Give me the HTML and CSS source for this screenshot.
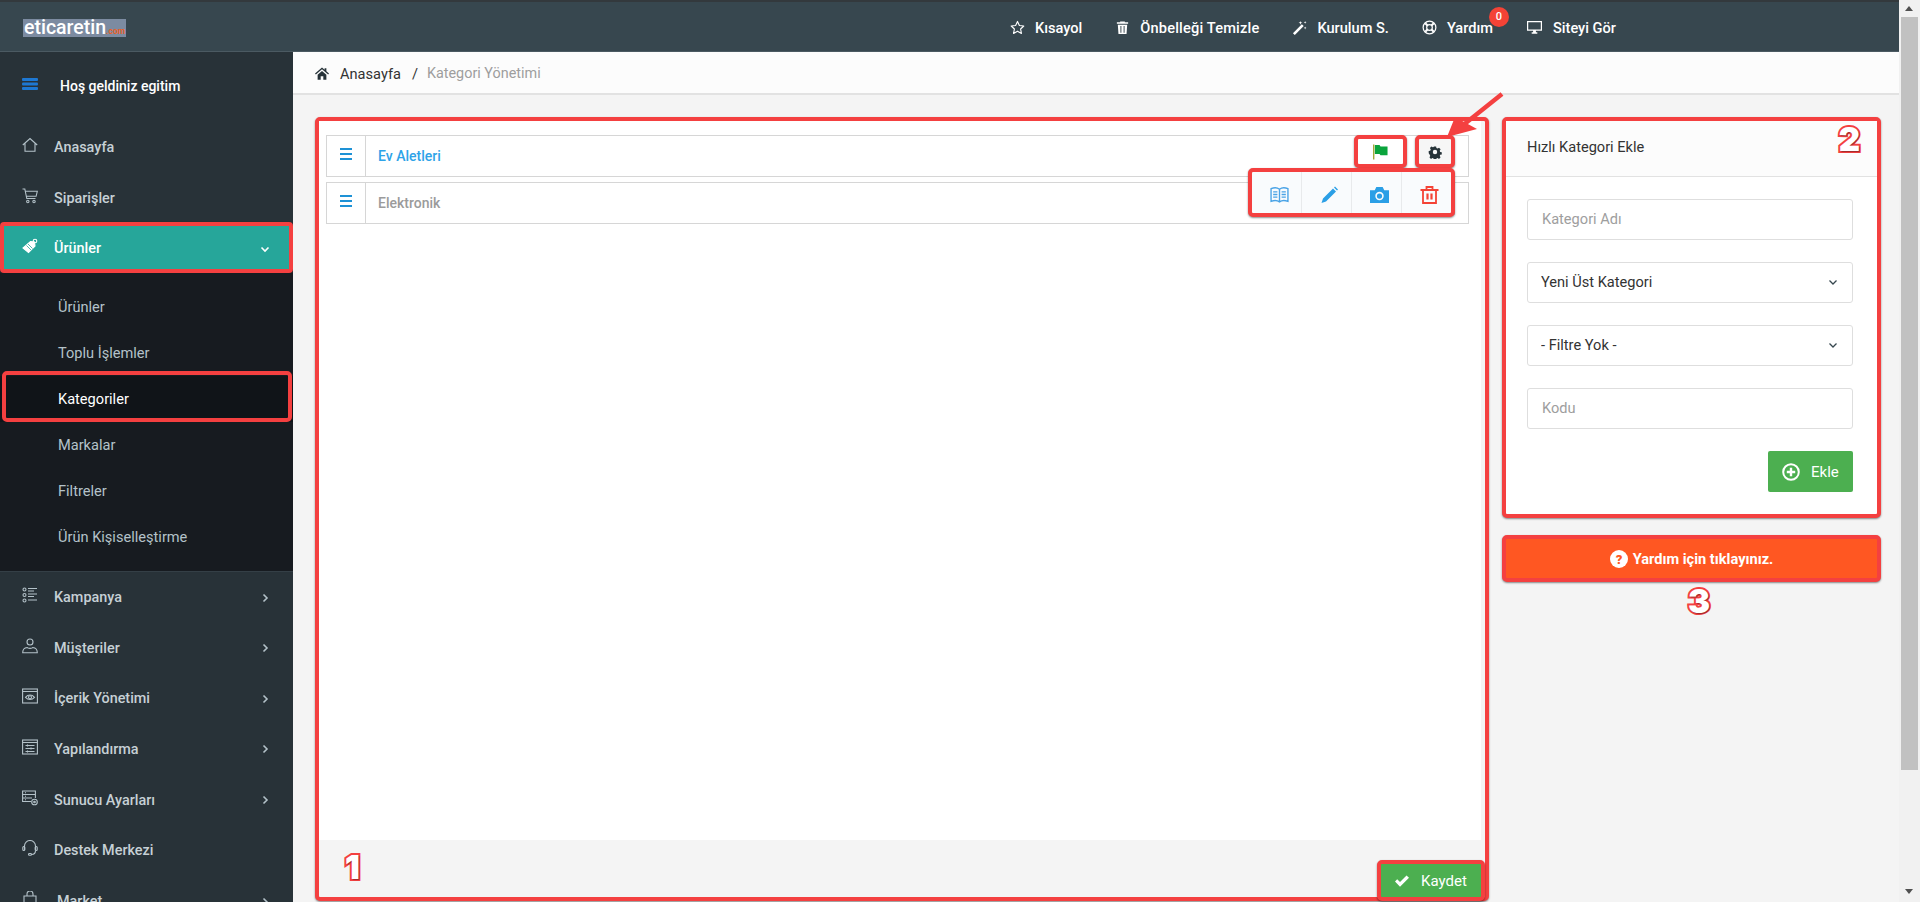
FILE: index.html
```html
<!DOCTYPE html>
<html lang="tr">
<head>
  <meta charset="UTF-8" />
  <title>Kategori Yönetimi</title>
  <link rel="stylesheet" href="styles.css">
</head>
<body>
  <div class="page">
    <header class="topbar">
      <div class="logo">eticaretin<span>.com</span></div>
      <nav class="topnav">
        <a class="topnav-item">
          <svg viewBox="0 0 16 16" fill="none" stroke="#fff" stroke-width="1.2" stroke-linejoin="round"><path d="M8 1.5l2 4.3 4.7.6-3.4 3.2.9 4.7L8 11.9l-4.2 2.4.9-4.7L1.300 6.400l4.700-.6z"/></svg>
          Kısayol
        </a>
        <a class="topnav-item topnav-cache">
          <svg viewBox="0 0 16 16" fill="#fff"><path d="M5.500 2.500V1.500h5v1H14v1.500H2V2.500zM3 5h10l-.7 10H3.700zM5.800 6.500v7h1v-7zm3.400 0v7h1v-7z"/></svg>
          Önbelleği Temizle
        </a>
        <a class="topnav-item">
          <svg viewBox="0 0 16 16" fill="#fff"><path d="M10.500 4.500l2 2L3 16l-2-2zM9 1l.5 1.500L11 3l-1.500.5L9 5l-.5-1.500L7 3l1.500-.5zM14 1l.4 1.100 1.100.4-1.100.4L14 4l-.4-1.100-1.100-.4 1.100-.4zM14 7l.4 1.100 1.100.4-1.100.4L14 10l-.4-1.100-1.100-.4 1.100-.4z"/></svg>
          Kurulum S.
        </a>
        <a class="topnav-item topnav-help">
          <svg viewBox="0 0 16 16" fill="none" stroke="#fff"><circle cx="8" cy="8" r="6.800" stroke-width="1.300"/><circle cx="8" cy="8" r="3" stroke-width="1.300"/><path stroke-width="2.200" d="M3.500 3.500l2.300 2.300M12.500 3.500l-2.300 2.300M3.500 12.500l2.300-2.300M12.500 12.500l-2.300-2.300"/></svg>
          Yardım
          <span class="badge">0</span>
        </a>
        <a class="topnav-item">
          <svg class="wide" viewBox="0 0 18 16" fill="#fff"><path d="M1 1h16v10.500H1zm1.300 1.300v7.900h13.400V2.300zM6 13h6v1.700H6zM7.500 11h3v2h-3z"/></svg>
          Siteyi Gör
        </a>
      </nav>
    </header>

    <div class="layout">
      <aside class="sidebar">
        <div class="welcome">
          <svg viewBox="0 0 16 12" fill="#1e78d2"><rect width="16" height="3" rx="1"/><rect y="4.500" width="16" height="3" rx="1"/><rect y="9" width="16" height="3" rx="1"/></svg>
          <span>Hoş geldiniz egitim</span>
        </div>

        <a class="nav-item">
          <svg viewBox="0 0 16 16"><path d="M.8 8L8 1.500 15.200 8M3 6.500v7.800h10V6.500"/></svg>
          Anasayfa
        </a>
        <a class="nav-item">
          <svg viewBox="0 0 16 16"><path d="M.5 1h2.300l2 9.500h8.700M3.300 3.300h12l-1.200 5H4.300"/><circle cx="5.800" cy="13.500" r="1.200"/><circle cx="12" cy="13.500" r="1.200"/></svg>
          Siparişler
        </a>
        <a class="nav-item nav-item-active">
          <svg class="icon-tag" viewBox="0 0 16 16"><path d="M8.500 3.500l4 .5.500 4-6.500 6.500L1 10z"/><circle cx="13" cy="3" r="1.800" fill="none"/><path d="M4.500 7.500l4.500 4.500M6 6l4.500 4.500" stroke="#26a69a" stroke-width=".8"/></svg>
          Ürünler
          <svg class="chevron" viewBox="0 0 10 10"><path d="M1.500 3.500L5 7l3.500-3.500"/></svg>
        </a>
        <div class="subnav">
          <a class="sub-item">Ürünler</a>
          <a class="sub-item">Toplu İşlemler</a>
          <a class="sub-item sub-item-active">Kategoriler</a>
          <a class="sub-item">Markalar</a>
          <a class="sub-item">Filtreler</a>
          <a class="sub-item">Ürün Kişiselleştirme</a>
        </div>
        <a class="nav-item nav-item-first">
          <svg viewBox="0 0 16 16"><circle cx="2.500" cy="2.500" r="1.500"/><circle cx="2.500" cy="8" r="1.500"/><circle cx="2.500" cy="13.500" r="1.500"/><path d="M6 1.500h9M6 4h6M6 7h9M6 9.500h6M6 13h9"/></svg>
          Kampanya
          <svg class="chevron" viewBox="0 0 10 10"><path d="M3.500 1.500L7 5 3.500 8.500"/></svg>
        </a>
        <a class="nav-item">
          <svg viewBox="0 0 16 16"><circle cx="8" cy="4" r="3"/><path d="M.7 14.700c0-3.500 2.500-5 4.500-5.200.8 1.200 4.800 1.200 5.600 0 2 .2 4.500 1.700 4.500 5.200z"/></svg>
          Müşteriler
          <svg class="chevron" viewBox="0 0 10 10"><path d="M3.500 1.500L7 5 3.500 8.500"/></svg>
        </a>
        <a class="nav-item">
          <svg viewBox="0 0 16 16"><rect x=".6" y="1" width="14.800" height="14"/><path d="M.6 3.500h14.800M3.500 9.300c2.500-3 6.500-3 9 0-2.500 3-6.500 3-9 0z"/><circle cx="8" cy="9.300" r="1.500"/></svg>
          İçerik Yönetimi
          <svg class="chevron" viewBox="0 0 10 10"><path d="M3.500 1.500L7 5 3.500 8.500"/></svg>
        </a>
        <a class="nav-item">
          <svg viewBox="0 0 16 16"><rect x=".6" y="1" width="14.800" height="14"/><path d="M.6 3.500h14.800M3.500 6.500h9M3.500 9.500h9M3.500 12.500h9M5.500 5.500v2M9 8.500v2M5.500 11.500v2"/></svg>
          Yapılandırma
          <svg class="chevron" viewBox="0 0 10 10"><path d="M3.500 1.500L7 5 3.500 8.500"/></svg>
        </a>
        <a class="nav-item">
          <svg viewBox="0 0 16 16"><path d="M9 11.500H.6V1h12.800v7M.6 4.500h12.800M.6 8h9.400M3 2.800h1M3 6.200h1M3 9.800h1"/><circle cx="12.500" cy="12" r="2.800"/><circle cx="12.500" cy="12" r=".8"/></svg>
          Sunucu Ayarları
          <svg class="chevron" viewBox="0 0 10 10"><path d="M3.500 1.500L7 5 3.500 8.500"/></svg>
        </a>
        <a class="nav-item">
          <svg viewBox="0 0 16 16"><path d="M2.500 10V6a5.500 5.500 0 0 1 11 0v4M13.500 10.500c0 2.800-1.800 4-4 4"/><rect x=".8" y="6.500" width="2" height="4" rx="1"/><rect x="13.200" y="6.500" width="2" height="4" rx="1"/><rect x="6.500" y="13.500" width="3" height="1.800" rx=".9"/></svg>
          Destek Merkezi
        </a>
        <a class="nav-item">
          <svg viewBox="0 0 16 16"><path d="M2 5h12v10H2zM5 5V3a3 3 0 0 1 6 0v2"/></svg>
          <span class="nav-market">Market</span>
          <svg class="chevron" viewBox="0 0 10 10"><path d="M3.500 1.500L7 5 3.500 8.500"/></svg>
        </a>
      </aside>

      <main class="content">
        <div class="breadcrumb">
          <svg viewBox="0 0 16 14" fill="#263238"><path d="M8 0l3 2.600V1h2v3.300L16 7l-1 1.100L8 2 1 8.100 0 7zM3 8.500L8 4l5 4.500V14H9.500v-4h-3v4H3z"/></svg>
          <a>Anasayfa</a>
          <span class="breadcrumb-sep">/</span>
          <span class="breadcrumb-current">Kategori Yönetimi</span>
        </div>

        <div class="content-body">
          <section class="tree-panel mark">
            <div class="tree-list">
              <div class="tree-row">
                <div class="tree-handle"><span></span></div>
                <a class="tree-title tree-title-active">Ev Aletleri</a>
                <div class="tree-cell tree-flag mark">
                  <svg viewBox="0 0 16 16"><rect width="1.500" height="16" fill="#a3a83a"/><path d="M2 .5h5l1 1.500h7.500v9.500H8L7 10H2z" fill="#0aa43c"/></svg>
                </div>
                <div class="tree-cell tree-gear mark">
                  <svg viewBox="0 0 16 16" fill="#263238"><path fill-rule="evenodd" d="M6.600 1h2.800l.4 2 1.500.7 1.800-1.100 2 2-1.100 1.800.6 1.500 2 .4v2.800l-2 .4-.6 1.500 1.100 1.800-2 2-1.800-1.100-1.500.6-.4 2H6.600l-.4-2-1.500-.6-1.800 1.100-2-2 1.100-1.800-.7-1.500L0 9.500V6.700l1.900-.4.700-1.500L1.500 3l2-2 1.800 1.100 1-.4zM8 5.300a2.800 2.800 0 1 0 0 5.600 2.800 2.800 0 0 0 0-5.600z" transform="translate(.8 .8) scale(.9)"/></svg>
                </div>
              </div>
              <div class="tree-row">
                <div class="tree-handle"><span></span></div>
                <a class="tree-title">Elektronik</a>
                <div class="tree-cell tree-flag"></div>
                <div class="tree-cell tree-gear"></div>
                <div class="tree-menu mark">
                  <a class="tree-menu-item">
                    <svg viewBox="0 0 18 16" fill="none" stroke="#4aa3e6" stroke-width="1.300"><path d="M9 2.500C7 1 3.500 1 1 2v12c2.500-1 6-1 8 .5 2-1.500 5.500-1.500 8-.5V2c-2.500-1-6-1-8 .5zM9 2.500v12M3 5h4M3 7.500h4M3 10h4M11 5h4M11 7.500h4M11 10h4"/></svg>
                  </a>
                  <a class="tree-menu-item">
                    <svg viewBox="0 0 18 18" fill="#2b9fe6"><path d="M12.500 2.500l3 3L5.500 15.500l-4.500 1.500 1.500-4.500zM13.500 1.500l1-1 3 3-1 1z"/></svg>
                  </a>
                  <a class="tree-menu-item">
                    <svg viewBox="0 0 18 15" fill="#2b9fe6"><path fill-rule="evenodd" d="M0 3h4.500l1.500-3h6l1.500 3H18v12H0zM9 4.500a4 4 0 1 0 0 8 4 4 0 0 0 0-8zm0 1.500a2.500 2.500 0 1 1 0 5 2.500 2.500 0 0 1 0-5z"/></svg>
                  </a>
                  <a class="tree-menu-item">
                    <svg viewBox="0 0 18 18" fill="none" stroke="#f44336" stroke-width="1.800"><path d="M0 4h18M6 4V1h6v3M2.500 4v13h13V4"/><path stroke-width="2.200" d="M7 7.500v6M11 7.500v6"/></svg>
                  </a>
                </div>
              </div>
            </div>
            <div class="tree-footer">
              <span class="step-no">1</span>
              <button class="btn-save mark" type="button">
                <svg viewBox="0 0 14 12" fill="#fff"><path d="M0 6.500L2.200 4.200 5 7l6.500-6.500L14 2.800 5 11.800z"/></svg>
                Kaydet
              </button>
            </div>
          </section>

          <div class="side-col">
            <section class="quick-add mark">
              <span class="step-no step-no-2">2</span>
              <h2 class="quick-add-title">Hızlı Kategori Ekle</h2>
              <form class="quick-add-form">
                <input class="field" type="text" placeholder="Kategori Adı" />
                <div class="select-wrap">
                  <select class="field">
                    <option>Yeni Üst Kategori</option>
                  </select>
                  <svg viewBox="0 0 10 10"><path d="M1.500 3.500L5 7l3.500-3.500"/></svg>
                </div>
                <div class="select-wrap">
                  <select class="field">
                    <option>- Filtre Yok -</option>
                  </select>
                  <svg viewBox="0 0 10 10"><path d="M1.500 3.500L5 7l3.500-3.500"/></svg>
                </div>
                <input class="field" type="text" placeholder="Kodu" />
                <button class="btn-add" type="button">
                  <svg viewBox="0 0 18 18" fill="none" stroke="#fff"><circle cx="9" cy="9" r="7.800" stroke-width="2"/><path stroke-width="2.400" d="M9 4.800v8.400M4.800 9h8.400"/></svg>
                  Ekle
                </button>
              </form>
            </section>

            <a class="help-bar mark">
              <svg viewBox="0 0 18 18"><circle cx="9" cy="9" r="9" fill="#fff"/><text x="9" y="13.500" text-anchor="middle" class="help-q">?</text></svg>
              Yardım için tıklayınız.
            </a>
            <span class="step-no step-no-3">3</span>
          </div>
        </div>

        <svg class="arrow" viewBox="0 0 65 52">
          <path d="M62 4L22 36" stroke="#f44040" stroke-width="4.500" fill="none"/>
          <path d="M7 47l8-20 22 12z" fill="#f44040"/>
        </svg>
      </main>
    </div>
  </div>

  <div class="scrollbar">
    <i class="scroll-up"></i>
    <div class="scroll-thumb"></div>
    <i class="scroll-down"></i>
  </div>
</body>
</html>
```

FILE: styles.css
```css
* {
  box-sizing: border-box;
  font-family: 'Roboto', sans-serif;
}

html,
body {
  margin: 0;
  height: 902px;
  overflow: hidden;
}

body {
  display: flex;
  background: #f4f4f4;
  font-size: 14.600px;
  color: #333;
}

a {
  color: inherit;
  text-decoration: none;
}

.page {
  flex: 1;
  min-width: 0;
  display: flex;
  flex-direction: column;
}

/* top bar */
.topbar {
  height: 52px;
  flex-shrink: 0;
  display: flex;
  align-items: center;
  padding: 2px 283px 0 23px;
  background: #37474f;
  border-top: 2px solid #33393d;
  border-bottom: 1px solid #4b5a62;
}

.logo {
  width: 103px;
  height: 18px;
  white-space: nowrap;
  background: #7c8ba1;
  color: #fff;
  font-size: 19.500px;
  font-weight: 500;
  line-height: 18px;
  padding-left: 1px;
}

.logo span {
  color: #e8622a;
  font-size: 8.500px;
  font-weight: 700;
}

.topnav {
  margin-left: auto;
  display: flex;
  gap: 33px;
}

.topnav-item {
  position: relative;
  display: flex;
  align-items: center;
  gap: 10px;
  color: #fff;
  font-weight: 500;
}

.topnav-cache {
  letter-spacing: 0.18px;
}

.topnav-item svg {
  width: 15px;
  height: 15px;
}

.topnav-item svg.wide {
  width: 17px;
}

.badge {
  position: absolute;
  right: -16px;
  top: -12px;
  width: 20px;
  height: 20px;
  border-radius: 50%;
  background: #f44336;
  font-size: 11px;
  line-height: 20px;
  text-align: center;
}

.layout {
  flex: 1;
  min-height: 0;
  display: flex;
}

/* sidebar */
.sidebar {
  width: 293px;
  flex-shrink: 0;
  overflow: hidden;
  background: #283238;
}

.welcome {
  height: 69px;
  display: flex;
  align-items: center;
  gap: 22px;
  padding: 0 0 2px 22px;
  color: #fff;
  font-weight: 500;
  font-size: 14px;
}

.welcome svg {
  width: 16px;
  height: 12px;
  margin-top: -4px;
}

.nav-item {
  height: 50.700px;
  display: flex;
  align-items: center;
  gap: 16px;
  padding: 2px 23px 0 22px;
  color: #c6d0d5;
  font-weight: 500;
  font-size: 14.400px;
}

.nav-item svg {
  width: 16px;
  height: 16px;
  flex-shrink: 0;
  margin-top: -5px;
  fill: none;
  stroke: #b4c2c9;
  stroke-width: 1.100;
}

.nav-item .chevron {
  width: 10px;
  height: 10px;
  margin: 0 0 0 auto;
  stroke-width: 1.600;
}

.nav-market {
  margin-left: 3px;
}

.nav-item-first {
  border-top: 1px solid #343f46;
}

.nav-item-active {
  background: #26a69a;
  color: #fff;
  padding: 2px 19px 0 18px;
  border: 4px solid #f44040;
  border-radius: 4px;
  box-shadow: 0 1px 2px rgba(0, 0, 0, 0.5);
}

.nav-item-active svg {
  stroke: #fff;
}

.nav-item-active svg.icon-tag {
  fill: #fff;
}

.subnav {
  padding: 11px 0;
  background: #171b20;
}

.sub-item {
  position: relative;
  display: block;
  height: 46px;
  line-height: 46px;
  padding-left: 58px;
  color: #b4c2c9;
}

.sub-item-active {
  color: #fff;
  background: #101418;
}

.sub-item-active::after {
  content: "";
  position: absolute;
  inset: -5px 1px 0 2px;
  border: 4px solid #f44040;
  border-radius: 5px;
}

/* main area */
.content {
  position: relative;
  flex: 1;
  min-width: 0;
  display: flex;
  flex-direction: column;
}

.breadcrumb {
  height: 43px;
  flex-shrink: 0;
  display: flex;
  align-items: center;
  gap: 11px;
  padding: 2px 0 0 22px;
  background: #fcfcfc;
  border-bottom: 2px solid #e2e2e2;
  color: #333;
}

.breadcrumb svg {
  width: 14px;
  height: 13px;
}

.breadcrumb-sep {
  margin-right: -2px;
}

.breadcrumb-current {
  color: #9e9e9e;
  font-size: 14.400px;
}

.content-body {
  flex: 1;
  min-height: 0;
  display: flex;
  gap: 13px;
  padding: 22px 18px 0 22px;
}

/* category tree */
.tree-panel {
  flex: 1;
  min-width: 0;
  height: 784px;
  display: flex;
  flex-direction: column;
  background: #f4f4f4;
}

.tree-list {
  flex: 1;
  margin-right: 4px;
  padding: 14px 12px 0 7px;
  background: #fff;
  display: flex;
  flex-direction: column;
  gap: 5px;
}

.tree-row {
  position: relative;
  height: 42px;
  display: flex;
  border: 1px solid #d6d6d6;
}

.tree-handle {
  width: 39px;
  border-right: 1px solid #d6d6d6;
  display: flex;
  justify-content: center;
  padding-top: 12px;
}

.tree-handle span {
  width: 12px;
  height: 12px;
  border-top: 2px solid #1e92d6;
  border-bottom: 2px solid #1e92d6;
  position: relative;
}

.tree-handle span::after {
  content: "";
  position: absolute;
  left: 0;
  right: 0;
  top: 3px;
  height: 2px;
  background: #1e92d6;
}

.tree-title {
  flex: 1;
  padding-left: 12px;
  line-height: 40px;
  font-size: 14px;
  font-weight: 500;
  color: #9b9b9b;
}

.tree-title-active {
  color: #2ea3e8;
}

.tree-cell {
  height: 33px;
  margin-top: -1px;
  border: 1px solid #e0e0e0;
  display: flex;
  align-items: center;
  justify-content: center;
  background: #fff;
}

.tree-cell svg {
  width: 15px;
  height: 16px;
}

.tree-flag {
  width: 53px;
}

.tree-gear {
  width: 40px;
  margin-left: 8px;
  margin-right: 13px;
  background: #f6f6f6;
}

.tree-gear svg {
  width: 14px;
  height: 14px;
}

.tree-menu {
  position: absolute;
  top: -15px;
  right: 13px;
  width: 207px;
  height: 49px;
  display: flex;
  background: #f9fbfd;
}

.tree-menu-item {
  flex: 1;
  display: flex;
  align-items: center;
  justify-content: center;
  padding: 5px 0 0 5px;
  border-left: 1px solid #e8eaec;
}

.tree-menu-item:first-child {
  border-left: 0;
}

.tree-menu-item svg {
  width: 19px;
  height: 18px;
}

.tree-footer {
  position: relative;
  height: 57px;
  flex-shrink: 0;
  display: flex;
  justify-content: flex-end;
  align-items: flex-end;
}

.btn-save {
  width: 108px;
  height: 41px;
  margin-bottom: -4px;
  display: flex;
  align-items: center;
  gap: 12px;
  padding: 0 0 0 14px;
  background: #4caf50;
  color: #fff;
  font-size: 15px;
  cursor: pointer;
}

.btn-save svg {
  width: 14px;
  height: 12px;
}

/* step numbers drawn over the shot */
.step-no {
  position: absolute;
  left: 26px;
  bottom: 12px;
  color: #fff;
  font-family: 'Inter', 'Roboto', sans-serif;
  font-size: 33px;
  font-weight: 900;
  line-height: 36px;
  -webkit-text-stroke: 4px #f44040;
  paint-order: stroke fill;
  text-shadow: 1px 1px 1px rgba(0, 0, 0, 0.35);
}

.step-no-2 {
  left: auto;
  right: 17px;
  bottom: auto;
  top: 0;
}

.step-no-3 {
  left: 186px;
  bottom: auto;
  top: 466px;
}

/* right column */
.side-col {
  position: relative;
  width: 379px;
  flex-shrink: 0;
}

.quick-add {
  position: relative;
  height: 401px;
  background: #fff;
}

.quick-add-title {
  margin: 0;
  height: 56px;
  padding-left: 21px;
  line-height: 52px;
  font-size: 14.600px;
  font-weight: 400;
  color: #333;
  background: #fcfcfc;
  border-bottom: 1px solid #e2e2e2;
}

.quick-add-form {
  display: flex;
  flex-direction: column;
  gap: 22px;
  padding: 22px 24px 0 21px;
}

.field {
  display: block;
  width: 100%;
  height: 41px;
  padding: 0 14px 2px;
  border: 1px solid #dedede;
  border-radius: 3px;
  background: #fff;
  font-size: 14.600px;
  color: #333;
  outline: none;
  appearance: none;
}

select.field {
  padding-left: 13px;
}

.field::placeholder {
  color: #9e9e9e;
}

.select-wrap {
  position: relative;
}

.select-wrap svg {
  position: absolute;
  right: 15px;
  top: 15px;
  width: 10px;
  height: 10px;
  fill: none;
  stroke: #37474f;
  stroke-width: 1.300;
}

.btn-add {
  align-self: flex-end;
  width: 85px;
  height: 41px;
  display: flex;
  align-items: center;
  gap: 11px;
  padding: 0 0 0 14px;
  border: 0;
  border-radius: 2px;
  background: #4caf50;
  color: #fff;
  font-size: 15px;
  cursor: pointer;
}

.btn-add svg {
  width: 18px;
  height: 18px;
}

.help-bar {
  height: 47px;
  margin-top: 17px;
  display: flex;
  align-items: center;
  justify-content: center;
  gap: 5px;
  background: #ff5722;
  color: #fff;
  font-weight: 700;
  font-size: 14.600px;
}

.help-bar svg {
  width: 18px;
  height: 18px;
}

.help-q {
  fill: #ff5722;
  font-size: 13px;
  font-weight: 900;
}

.arrow {
  position: absolute;
  left: 1147px;
  top: 38px;
  width: 65px;
  height: 52px;
}

/* fake window scrollbar */
.scrollbar {
  position: relative;
  width: 21px;
  flex-shrink: 0;
  background: #f1f1f1;
  padding: 17px 2px 0;
}

.scroll-thumb {
  height: 753px;
  background: #c1c1c1;
}

.scroll-up,
.scroll-down {
  position: absolute;
  left: 6px;
  width: 0;
  height: 0;
  border-left: 4.500px solid transparent;
  border-right: 4.500px solid transparent;
}

.scroll-up {
  top: 6px;
  border-bottom: 5px solid #505050;
}

.scroll-down {
  bottom: 8px;
  border-top: 5px solid #505050;
}

/* red annotation frame, kept last so it wins over the cell borders */
.mark,
.tree-cell.mark {
  border: 4px solid #f44040;
  border-radius: 5px;
  box-shadow: 0 1px 2px rgba(0, 0, 0, 0.45);
}
```
